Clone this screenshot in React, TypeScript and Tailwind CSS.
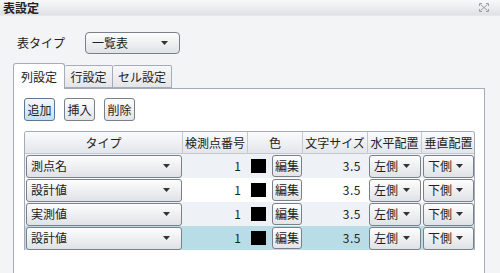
const font = { fontFamily: '"Noto Sans CJK JP", "Liberation Sans", sans-serif' };

const rows = [
  { type: "測点名", bg: "bg-[#eef1f6]" },
  { type: "設計値", bg: "bg-white" },
  { type: "実測値", bg: "bg-[#eef1f6]" },
  { type: "設計値", bg: "bg-[#b9dde7]" },
];

function Arrow() {
  return (
    <svg width="7" height="4" viewBox="0 0 7 4" className="shrink-0">
      <path d="M0 0 H7 L3.5 4 Z" fill="#333" />
    </svg>
  );
}

function Combo({ label, className }: { label: string; className: string }) {
  return (
    <div
      className={`flex items-center justify-between rounded-[3px] border border-[#7a8088] bg-gradient-to-b from-[#fdfdfd] to-[#dfe2e6] pl-[4px] text-[12px] text-[#222] ${className}`}
    >
      <span className="leading-none">{label}</span>
      <Arrow />
    </div>
  );
}

function Btn({ label, active }: { label: string; active?: boolean }) {
  return (
    <div
      className={`flex h-[23px] w-[31px] items-center justify-center rounded-[3px] border text-[12px] text-[#222] ${
        active
          ? "border-[#5a7896] bg-gradient-to-b from-[#f4f9fd] to-[#c4dff3]"
          : "border-[#7a8088] bg-gradient-to-b from-[#fdfdfd] to-[#e3e5e8]"
      }`}
    >
      {label}
    </div>
  );
}

function CloseIcon() {
  return (
    <svg width="10" height="9" viewBox="0 0 10 9">
      <g stroke="#9aa0a6" strokeWidth="1" fill="none">
        <path d="M1.5 1.5 L8.5 7.5 M8.5 1.5 L1.5 7.5" />
        <path d="M0.5 3 V0.5 H3 M7 0.5 H9.5 V3 M0.5 6 V8.5 H3 M7 8.5 H9.5 V6" />
      </g>
    </svg>
  );
}

export default function App() {
  const headers = ["タイプ", "検測点番号", "色", "文字サイズ", "水平配置", "垂直配置"];
  return (
    <div className="flex h-[273px] w-[500px] flex-col overflow-hidden bg-[#f3f4f6] text-[#222]" style={font}>
      <div className="flex h-[16px] items-center justify-between border-b border-[#e6e8eb] bg-gradient-to-b from-[#f7f8f9] to-[#dfe2e5] pl-[3px] pr-[11px]">
        <span className="text-[12px] font-bold leading-none">表設定</span>
        <CloseIcon />
      </div>

      <div className="mt-[16px] flex items-center pl-[17px]">
        <span className="w-[68px] text-[12px]">表タイプ</span>
        <Combo label="一覧表" className="h-[22px] w-[95px] rounded-[4px] pl-[6px] pr-[11px]" />
      </div>

      <div className="ml-[13px] mt-[9px] flex items-end">
        <div className="relative z-10 -mb-px flex h-[26px] w-[52px] items-center justify-center rounded-t-[3px] border border-b-0 border-[#a3acb8] bg-white text-[12px]">
          列設定
        </div>
        <div className="flex h-[23px] w-[48px] items-center justify-center rounded-t-[2px] border border-l-0 border-[#a3acb8] bg-gradient-to-b from-[#f8f8f8] to-[#e4e5e7] text-[12px]">
          行設定
        </div>
        <div className="flex h-[23px] w-[59px] items-center justify-center rounded-t-[2px] border border-l-0 border-[#a3acb8] bg-gradient-to-b from-[#f8f8f8] to-[#e4e5e7] text-[12px]">
          セル設定
        </div>
      </div>

      <div className="ml-[13px] flex w-[472px] flex-1 flex-col border border-b-0 border-[#a3acb8] bg-white pl-[10px] pt-[9px]">
        <div className="flex gap-[9px]">
          <Btn label="追加" active />
          <Btn label="挿入" />
          <Btn label="削除" />
        </div>

        <div className="mt-[10px] w-[451px] overflow-hidden rounded-t-[3px] border border-b-0 border-[#a3acb8]">
          <div className="grid h-[22px] grid-cols-[158px_65px_55px_65px_54px_53px] border-b border-[#c4c9d0] bg-gradient-to-b from-[#fbfbfc] to-[#e3e6ea] text-[12px]">
            {headers.map((h, i) => (
              <div
                key={h}
                className={`flex items-center justify-center leading-none ${i < 5 ? "border-r border-[#c4c9d0]" : ""}`}
              >
                {h}
              </div>
            ))}
          </div>
          {rows.map((r, i) => (
            <div
              key={i}
              className={`grid h-[24px] grid-cols-[158px_65px_55px_65px_54px_53px] items-center text-[12px] ${r.bg}`}
            >
              <div className="px-px">
                <Combo label={r.type} className="h-[23px] pr-[11px]" />
              </div>
              <div className="pr-[7px] text-right leading-none">1</div>
              <div className="flex items-center gap-[6px] pl-[3px]">
                <div className="h-[14px] w-[15px] bg-black" />
                <div className="flex h-[22px] w-[30px] items-center justify-center rounded-[3px] border border-[#7a8088] bg-gradient-to-b from-[#fdfdfd] to-[#e3e5e8] leading-none">
                  編集
                </div>
              </div>
              <div className="pr-[7px] text-right leading-none tracking-[0.5px]">3.5</div>
              <div className="px-px">
                <Combo label="左側" className="h-[23px] pr-[10px]" />
              </div>
              <div className="px-px">
                <Combo label="下側" className="h-[23px] pr-[10px]" />
              </div>
            </div>
          ))}
        </div>
      </div>
    </div>
  );
}
